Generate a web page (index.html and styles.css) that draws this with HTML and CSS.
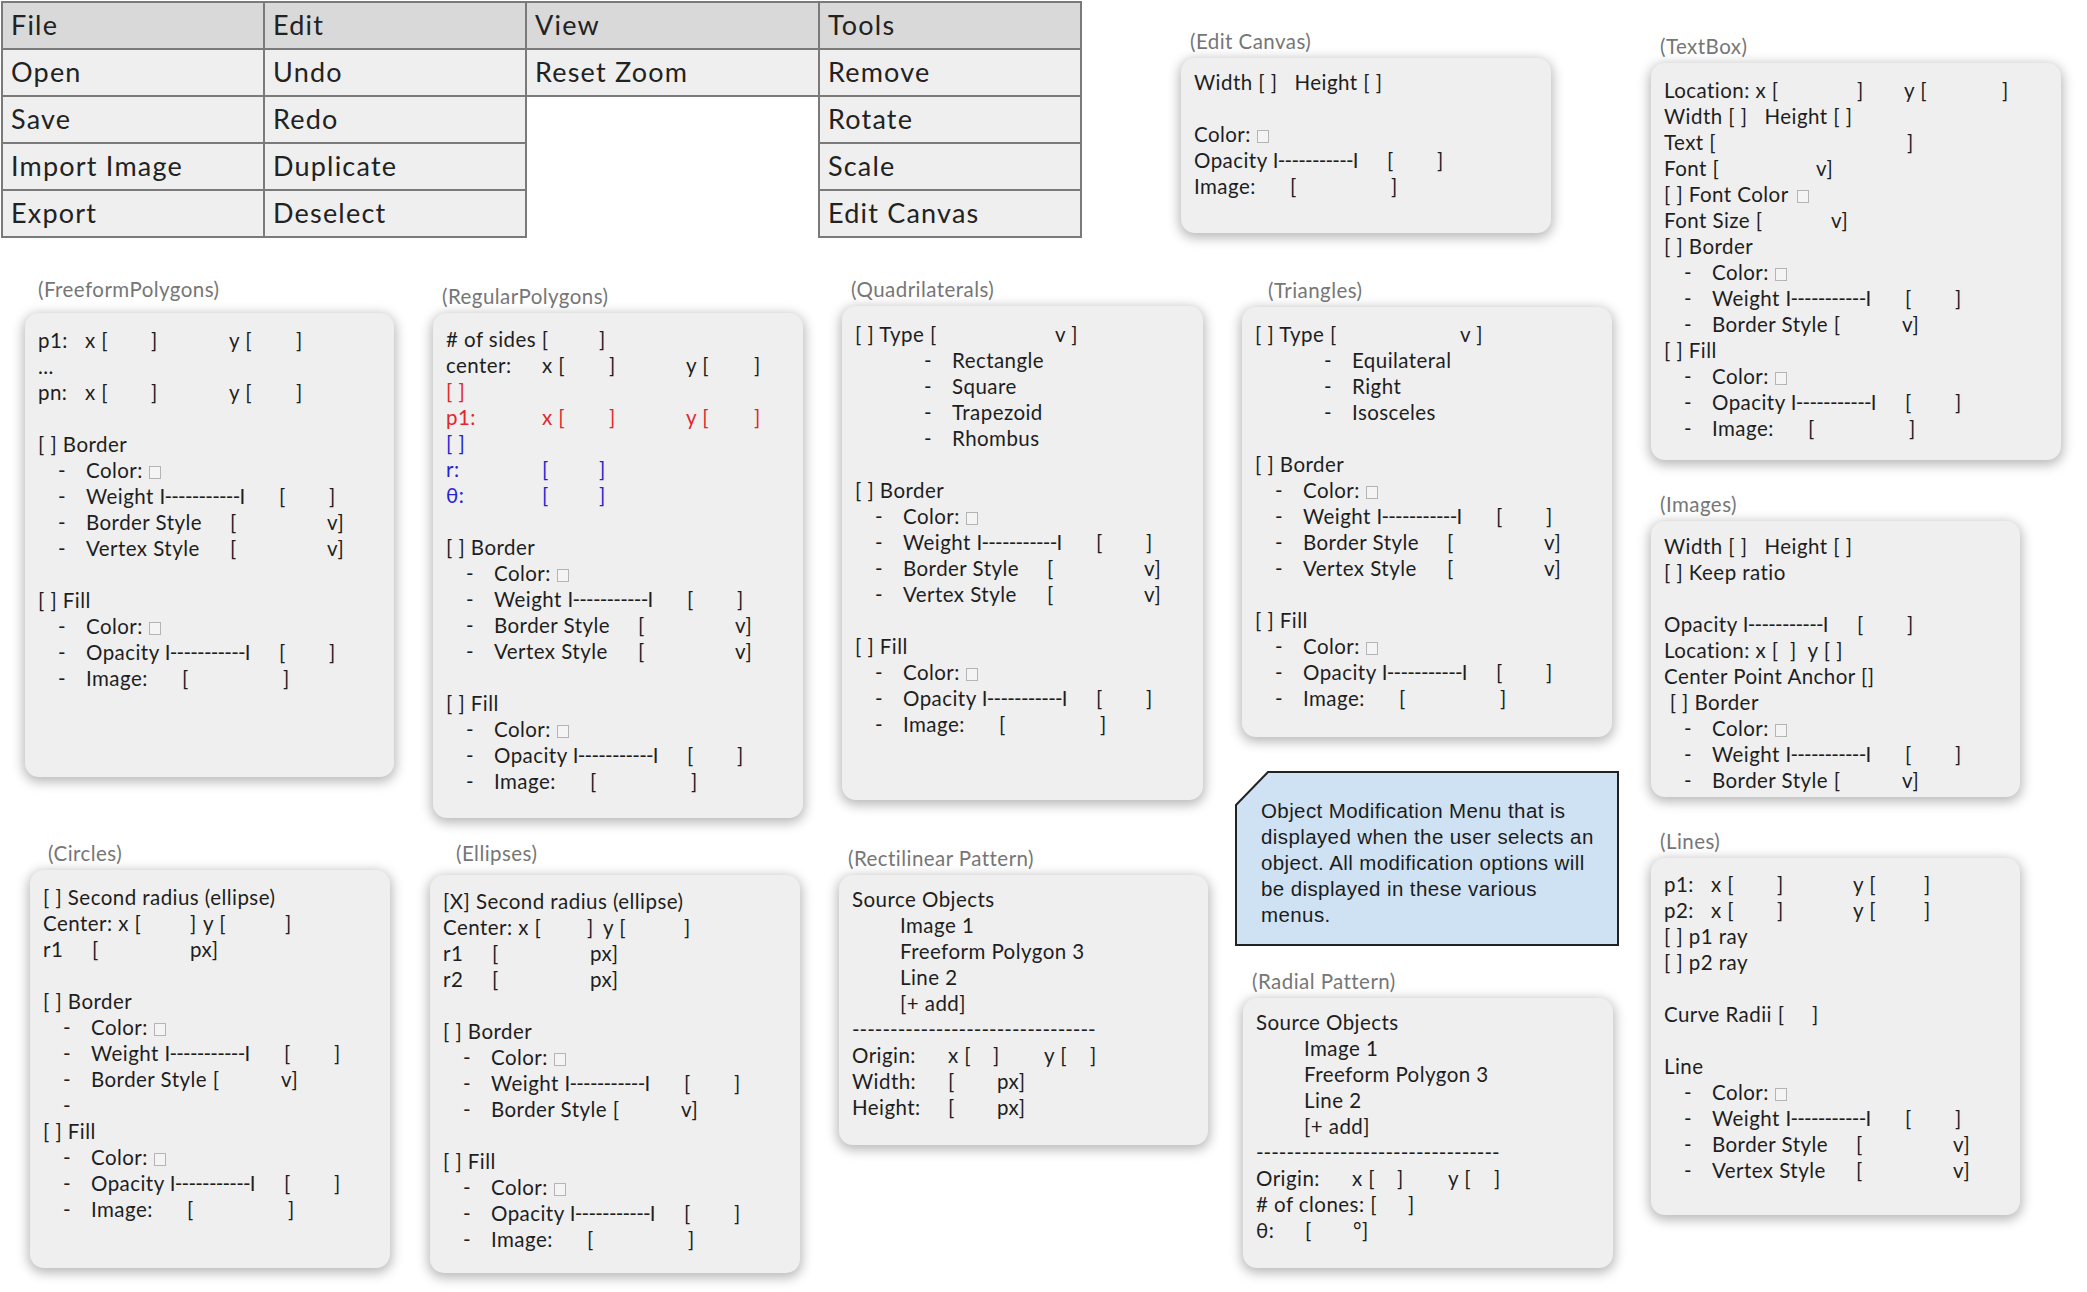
FILE: index.html
```html
<!DOCTYPE html>
<html>
<head>
<meta charset="utf-8">
<title>Object Modification Menus</title>
<link rel="stylesheet" href="styles.css">
</head>
<body>
<div class="board">
  <table class="menu">
    <colgroup><col class="c-file"><col class="c-edit"><col class="c-view"><col class="c-tools"></colgroup>
    <tr class="head"><td>File</td><td>Edit</td><td>View</td><td>Tools</td></tr>
    <tr><td>Open</td><td>Undo</td><td>Reset Zoom</td><td>Remove</td></tr>
    <tr><td>Save</td><td>Redo</td><td class="blank"></td><td>Rotate</td></tr>
    <tr><td>Import Image</td><td>Duplicate</td><td class="blank"></td><td>Scale</td></tr>
    <tr><td>Export</td><td>Deselect</td><td class="blank"></td><td>Edit Canvas</td></tr>
  </table>

  <section class="panel p-canvas">
    <div class="label">(Edit Canvas)</div>
    <div class="card">
<div class="ln">Width [ ]   Height [ ]</div>
<div class="ln"></div>
<div class="ln">Color: <i class="sw"></i></div>
<div class="ln"><span class="s w193">Opacity <span class="sl">I-----------I</span></span><span class="s w50">[</span>]</div>
<div class="ln"><span class="s w96">Image:</span><span class="s w101">[</span>]</div>
    </div>
  </section>

  <section class="panel p-textbox">
    <div class="label">(TextBox)</div>
    <div class="card">
<div class="ln"><span class="s w193">Location: x [</span><span class="s w47">]</span><span class="s w98">y [</span>]</div>
<div class="ln">Width [ ]   Height [ ]</div>
<div class="ln"><span class="s w243">Text [</span>]</div>
<div class="ln"><span class="s w152">Font [</span>v]</div>
<div class="ln"><span class="s w133">[ ] Font Color</span><i class="sw"></i></div>
<div class="ln"><span class="s w167">Font Size [</span>v]</div>
<div class="ln">[ ] Border</div>
<div class="ln d"><span class="dash">-</span>Color: <i class="sw"></i></div>
<div class="ln d"><span class="dash">-</span><span class="s w193">Weight <span class="sl">I-----------I</span></span><span class="s w50">[</span>]</div>
<div class="ln d"><span class="dash">-</span><span class="s w190">Border Style [</span>v]</div>
<div class="ln">[ ] Fill</div>
<div class="ln d"><span class="dash">-</span>Color: <i class="sw"></i></div>
<div class="ln d"><span class="dash">-</span><span class="s w193">Opacity <span class="sl">I-----------I</span></span><span class="s w50">[</span>]</div>
<div class="ln d"><span class="dash">-</span><span class="s w96">Image:</span><span class="s w101">[</span>]</div>
    </div>
  </section>

  <section class="panel p-freeform">
    <div class="label">(FreeformPolygons)</div>
    <div class="card">
<div class="ln"><span class="s w47">p1:</span><span class="s w66">x [</span><span class="s w78">]</span><span class="s w67">y [</span>]</div>
<div class="ln">...</div>
<div class="ln"><span class="s w47">pn:</span><span class="s w66">x [</span><span class="s w78">]</span><span class="s w67">y [</span>]</div>
<div class="ln"></div>
<div class="ln">[ ] Border</div>
<div class="ln d"><span class="dash">-</span>Color: <i class="sw"></i></div>
<div class="ln d"><span class="dash">-</span><span class="s w193">Weight <span class="sl">I-----------I</span></span><span class="s w50">[</span>]</div>
<div class="ln d"><span class="dash">-</span><span class="s w144">Border Style</span><span class="s w97">[</span>v]</div>
<div class="ln d"><span class="dash">-</span><span class="s w144">Vertex Style</span><span class="s w97">[</span>v]</div>
<div class="ln"></div>
<div class="ln">[ ] Fill</div>
<div class="ln d"><span class="dash">-</span>Color: <i class="sw"></i></div>
<div class="ln d"><span class="dash">-</span><span class="s w193">Opacity <span class="sl">I-----------I</span></span><span class="s w50">[</span>]</div>
<div class="ln d"><span class="dash">-</span><span class="s w96">Image:</span><span class="s w101">[</span>]</div>
    </div>
  </section>

  <section class="panel p-regular">
    <div class="label">(RegularPolygons)</div>
    <div class="card">
<div class="ln"><span class="s w153"># of sides [</span>]</div>
<div class="ln"><span class="s w96">center:</span><span class="s w67">x [</span><span class="s w77">]</span><span class="s w68">y [</span>]</div>
<div class="ln red">[ ]</div>
<div class="ln red"><span class="s w96">p1:</span><span class="s w67">x [</span><span class="s w77">]</span><span class="s w68">y [</span>]</div>
<div class="ln blue">[ ]</div>
<div class="ln blue"><span class="s w96">r:</span><span class="s w57">[</span>]</div>
<div class="ln blue"><span class="s w96">θ:</span><span class="s w57">[</span>]</div>
<div class="ln"></div>
<div class="ln">[ ] Border</div>
<div class="ln d"><span class="dash">-</span>Color: <i class="sw"></i></div>
<div class="ln d"><span class="dash">-</span><span class="s w193">Weight <span class="sl">I-----------I</span></span><span class="s w50">[</span>]</div>
<div class="ln d"><span class="dash">-</span><span class="s w144">Border Style</span><span class="s w97">[</span>v]</div>
<div class="ln d"><span class="dash">-</span><span class="s w144">Vertex Style</span><span class="s w97">[</span>v]</div>
<div class="ln"></div>
<div class="ln">[ ] Fill</div>
<div class="ln d"><span class="dash">-</span>Color: <i class="sw"></i></div>
<div class="ln d"><span class="dash">-</span><span class="s w193">Opacity <span class="sl">I-----------I</span></span><span class="s w50">[</span>]</div>
<div class="ln d"><span class="dash">-</span><span class="s w96">Image:</span><span class="s w101">[</span>]</div>
    </div>
  </section>

  <section class="panel p-quad">
    <div class="label">(Quadrilaterals)</div>
    <div class="card">
<div class="ln"><span class="s w200">[ ] Type [</span>v ]</div>
<div class="ln dd"><span class="dash">-</span>Rectangle</div>
<div class="ln dd"><span class="dash">-</span>Square</div>
<div class="ln dd"><span class="dash">-</span>Trapezoid</div>
<div class="ln dd"><span class="dash">-</span>Rhombus</div>
<div class="ln"></div>
<div class="ln">[ ] Border</div>
<div class="ln d"><span class="dash">-</span>Color: <i class="sw"></i></div>
<div class="ln d"><span class="dash">-</span><span class="s w193">Weight <span class="sl">I-----------I</span></span><span class="s w50">[</span>]</div>
<div class="ln d"><span class="dash">-</span><span class="s w144">Border Style</span><span class="s w97">[</span>v]</div>
<div class="ln d"><span class="dash">-</span><span class="s w144">Vertex Style</span><span class="s w97">[</span>v]</div>
<div class="ln"></div>
<div class="ln">[ ] Fill</div>
<div class="ln d"><span class="dash">-</span>Color: <i class="sw"></i></div>
<div class="ln d"><span class="dash">-</span><span class="s w193">Opacity <span class="sl">I-----------I</span></span><span class="s w50">[</span>]</div>
<div class="ln d"><span class="dash">-</span><span class="s w96">Image:</span><span class="s w101">[</span>]</div>
    </div>
  </section>

  <section class="panel p-tri">
    <div class="label">(Triangles)</div>
    <div class="card">
<div class="ln"><span class="s w205">[ ] Type [</span>v ]</div>
<div class="ln dd"><span class="dash">-</span>Equilateral</div>
<div class="ln dd"><span class="dash">-</span>Right</div>
<div class="ln dd"><span class="dash">-</span>Isosceles</div>
<div class="ln"></div>
<div class="ln">[ ] Border</div>
<div class="ln d"><span class="dash">-</span>Color: <i class="sw"></i></div>
<div class="ln d"><span class="dash">-</span><span class="s w193">Weight <span class="sl">I-----------I</span></span><span class="s w50">[</span>]</div>
<div class="ln d"><span class="dash">-</span><span class="s w144">Border Style</span><span class="s w97">[</span>v]</div>
<div class="ln d"><span class="dash">-</span><span class="s w144">Vertex Style</span><span class="s w97">[</span>v]</div>
<div class="ln"></div>
<div class="ln">[ ] Fill</div>
<div class="ln d"><span class="dash">-</span>Color: <i class="sw"></i></div>
<div class="ln d"><span class="dash">-</span><span class="s w193">Opacity <span class="sl">I-----------I</span></span><span class="s w50">[</span>]</div>
<div class="ln d"><span class="dash">-</span><span class="s w96">Image:</span><span class="s w101">[</span>]</div>
    </div>
  </section>

  <section class="panel p-images">
    <div class="label">(Images)</div>
    <div class="card">
<div class="ln">Width [ ]   Height [ ]</div>
<div class="ln">[ ] Keep ratio</div>
<div class="ln"></div>
<div class="ln"><span class="s w193">Opacity <span class="sl">I-----------I</span></span><span class="s w50">[</span>]</div>
<div class="ln">Location: x [  ]  y [ ]</div>
<div class="ln">Center Point Anchor []</div>
<div class="ln"> [ ] Border</div>
<div class="ln d"><span class="dash">-</span>Color: <i class="sw"></i></div>
<div class="ln d"><span class="dash">-</span><span class="s w193">Weight <span class="sl">I-----------I</span></span><span class="s w50">[</span>]</div>
<div class="ln d"><span class="dash">-</span><span class="s w190">Border Style [</span>v]</div>
    </div>
  </section>

  <section class="panel p-circles">
    <div class="label">(Circles)</div>
    <div class="card">
<div class="ln">[ ] Second radius (ellipse)</div>
<div class="ln"><span class="s w147">Center: x [</span><span class="s w13">]</span><span class="s w82">y [</span>]</div>
<div class="ln"><span class="s w49">r1</span><span class="s w98">[</span>px]</div>
<div class="ln"></div>
<div class="ln">[ ] Border</div>
<div class="ln d"><span class="dash">-</span>Color: <i class="sw"></i></div>
<div class="ln d"><span class="dash">-</span><span class="s w193">Weight <span class="sl">I-----------I</span></span><span class="s w50">[</span>]</div>
<div class="ln d"><span class="dash">-</span><span class="s w190">Border Style [</span>v]</div>
<div class="ln d"><span class="dash">-</span></div>
<div class="ln">[ ] Fill</div>
<div class="ln d"><span class="dash">-</span>Color: <i class="sw"></i></div>
<div class="ln d"><span class="dash">-</span><span class="s w193">Opacity <span class="sl">I-----------I</span></span><span class="s w50">[</span>]</div>
<div class="ln d"><span class="dash">-</span><span class="s w96">Image:</span><span class="s w101">[</span>]</div>
    </div>
  </section>

  <section class="panel p-ellipses">
    <div class="label">(Ellipses)</div>
    <div class="card">
<div class="ln">[X] Second radius (ellipse)</div>
<div class="ln"><span class="s w144">Center: x [</span><span class="s w16">]</span><span class="s w81">y [</span>]</div>
<div class="ln"><span class="s w49">r1</span><span class="s w98">[</span>px]</div>
<div class="ln"><span class="s w49">r2</span><span class="s w98">[</span>px]</div>
<div class="ln"></div>
<div class="ln">[ ] Border</div>
<div class="ln d"><span class="dash">-</span>Color: <i class="sw"></i></div>
<div class="ln d"><span class="dash">-</span><span class="s w193">Weight <span class="sl">I-----------I</span></span><span class="s w50">[</span>]</div>
<div class="ln d"><span class="dash">-</span><span class="s w190">Border Style [</span>v]</div>
<div class="ln"></div>
<div class="ln">[ ] Fill</div>
<div class="ln d"><span class="dash">-</span>Color: <i class="sw"></i></div>
<div class="ln d"><span class="dash">-</span><span class="s w193">Opacity <span class="sl">I-----------I</span></span><span class="s w50">[</span>]</div>
<div class="ln d"><span class="dash">-</span><span class="s w96">Image:</span><span class="s w101">[</span>]</div>
    </div>
  </section>

  <section class="panel p-rect">
    <div class="label">(Rectilinear Pattern)</div>
    <div class="card">
<div class="ln">Source Objects</div>
<div class="ln in">Image 1</div>
<div class="ln in">Freeform Polygon 3</div>
<div class="ln in">Line 2</div>
<div class="ln in">[+ add]</div>
<div class="ln rule">--------------------------------</div>
<div class="ln"><span class="s w96">Origin:</span><span class="s w45">x [</span><span class="s w51">]</span><span class="s w46">y [</span>]</div>
<div class="ln"><span class="s w96">Width:</span><span class="s w49">[</span>px]</div>
<div class="ln"><span class="s w96">Height:</span><span class="s w49">[</span>px]</div>
    </div>
  </section>

  <div class="note">
    <svg class="note-shape" viewBox="0 0 384 175" preserveAspectRatio="none"><polygon points="1,34 33,1 383,1 383,174 1,174"/></svg>
    <p>Object Modification Menu that is<br>displayed when the user selects an<br>object. All modification options will<br>be displayed in these various<br>menus.</p>
  </div>

  <section class="panel p-radial">
    <div class="label">(Radial Pattern)</div>
    <div class="card">
<div class="ln">Source Objects</div>
<div class="ln in">Image 1</div>
<div class="ln in">Freeform Polygon 3</div>
<div class="ln in">Line 2</div>
<div class="ln in">[+ add]</div>
<div class="ln rule">--------------------------------</div>
<div class="ln"><span class="s w96">Origin:</span><span class="s w45">x [</span><span class="s w51">]</span><span class="s w46">y [</span>]</div>
<div class="ln"><span class="s w152"># of clones: [</span>]</div>
<div class="ln"><span class="s w49">θ:</span><span class="s w48">[</span>°]</div>
    </div>
  </section>

  <section class="panel p-lines">
    <div class="label">(Lines)</div>
    <div class="card">
<div class="ln"><span class="s w47">p1:</span><span class="s w66">x [</span><span class="s w76">]</span><span class="s w71">y [</span>]</div>
<div class="ln"><span class="s w47">p2:</span><span class="s w66">x [</span><span class="s w76">]</span><span class="s w71">y [</span>]</div>
<div class="ln">[ ] p1 ray</div>
<div class="ln">[ ] p2 ray</div>
<div class="ln"></div>
<div class="ln"><span class="s w148">Curve Radii [</span>]</div>
<div class="ln"></div>
<div class="ln">Line</div>
<div class="ln d"><span class="dash">-</span>Color: <i class="sw"></i></div>
<div class="ln d"><span class="dash">-</span><span class="s w193">Weight <span class="sl">I-----------I</span></span><span class="s w50">[</span>]</div>
<div class="ln d"><span class="dash">-</span><span class="s w144">Border Style</span><span class="s w97">[</span>v]</div>
<div class="ln d"><span class="dash">-</span><span class="s w144">Vertex Style</span><span class="s w97">[</span>v]</div>
    </div>
  </section>
</div>
</body>
</html>
```

FILE: styles.css
```css
* { box-sizing: border-box; }
html, body { margin: 0; padding: 0; background: #ffffff; }
body {
  font-family: Lato, "Open Sans", "Liberation Sans", sans-serif;
  color: #1e1e1e;
}
.board {
  position: relative;
  width: 2087px;
  height: 1292px;
  overflow: hidden;
}

/* ---------- top menu table ---------- */
.menu {
  border-collapse: collapse;
  table-layout: fixed;
  width: 1079px;
  margin: 1px 0 0 1px;
  font-size: 27px;
  letter-spacing: 1.2px;
  color: #222;
}
.c-file, .c-edit, .c-tools { width: 262px; }
.c-view { width: 293px; }
.menu tr { height: 47px; }
.menu td {
  border: 2px solid #7a7a7a;
  background: #efefef;
  padding: 0 8px 3px 8px;
  vertical-align: middle;
  white-space: nowrap;
}
.menu .head td { background: #d9d9d9; }
.menu td.blank { border: none; background: transparent; }

/* ---------- floating panels ---------- */
.panel {
  position: absolute;
  display: flex;
  flex-direction: column;
}
.label {
  font-size: 20.5px;
  letter-spacing: 0.45px;
  line-height: 26px;
  height: 26px;
  color: #767676;
  padding-left: 9px;
  margin-bottom: 4px;
  white-space: nowrap;
}
.card {
  background: #efefef;
  border-radius: 14px;
  box-shadow: 0 3px 12px 2px rgba(0, 0, 0, 0.28);
  padding: 13px 10px 0 13px;
  font-size: 20.5px;
  letter-spacing: 0.45px;
  line-height: 26px;
  overflow: hidden;
}
.ln { height: 26px; white-space: pre; }
.ln.d { padding-left: 20px; }
.ln.dd { padding-left: 69px; }
.ln.in { padding-left: 48px; }
.dash { display: inline-block; width: 28px; }
.s { display: inline-block; }
.sl { letter-spacing: -0.8px; }
.red { color: #e3262b; }
.blue { color: #2424d6; }
.rule { letter-spacing: 0; }
.sw {
  display: inline-block;
  width: 12px;
  height: 13px;
  border: 1px solid #b4b4b4;
  background: #f4f4f4;
  vertical-align: -1px;
}

.w13 { width: 13px; } .w16 { width: 16px; } .w45 { width: 45px; } .w46 { width: 46px; }
.w47 { width: 47px; } .w48 { width: 48px; } .w49 { width: 49px; } .w50 { width: 50px; }
.w51 { width: 51px; } .w57 { width: 57px; } .w66 { width: 66px; } .w67 { width: 67px; }
.w68 { width: 68px; } .w71 { width: 71px; } .w76 { width: 76px; } .w77 { width: 77px; }
.w78 { width: 78px; } .w81 { width: 81px; } .w82 { width: 82px; } .w96 { width: 96px; }
.w97 { width: 97px; } .w98 { width: 98px; } .w101 { width: 101px; } .w133 { width: 133px; }
.w144 { width: 144px; } .w147 { width: 147px; } .w148 { width: 148px; } .w152 { width: 152px; }
.w153 { width: 153px; } .w167 { width: 167px; } .w190 { width: 190px; } .w193 { width: 193px; }
.w200 { width: 200px; } .w205 { width: 205px; } .w243 { width: 243px; }

/* panel placement on the canvas */
.p-canvas { left: 1181px; top: 28px; }
.p-canvas .card { width: 370px; height: 175px; padding-top: 11px; }

.p-textbox { left: 1651px; top: 33px; }
.p-textbox .card { width: 410px; height: 397px; padding-top: 14px; }

.p-freeform { left: 25px; top: 276px; }
.p-freeform .label { padding-left: 13px; margin-bottom: 11px; }
.p-freeform .card { width: 369px; height: 464px; padding-top: 14px; }

.p-regular { left: 433px; top: 283px; }
.p-regular .card { width: 370px; height: 505px; }

.p-quad { left: 842px; top: 276px; }
.p-quad .card { width: 361px; height: 494px; padding-top: 15px; }

.p-tri { left: 1242px; top: 277px; }
.p-tri .label { padding-left: 26px; }
.p-tri .card { width: 370px; height: 430px; padding-top: 14px; }

.p-images { left: 1651px; top: 491px; }
.p-images .card { width: 369px; height: 276px; padding-top: 12px; }

.p-circles { left: 30px; top: 840px; }
.p-circles .label { padding-left: 18px; }
.p-circles .card { width: 360px; height: 398px; padding-top: 14px; }

.p-ellipses { left: 430px; top: 840px; }
.p-ellipses .label { padding-left: 26px; margin-bottom: 9px; }
.p-ellipses .card { width: 370px; height: 398px; }

.p-rect { left: 839px; top: 845px; }
.p-rect .card { width: 369px; height: 270px; padding-top: 11px; }

.p-radial { left: 1243px; top: 968px; }
.p-radial .card { width: 370px; height: 270px; padding-top: 11px; }

.p-lines { left: 1651px; top: 828px; }
.p-lines .card { width: 369px; height: 357px; }

/* note callout */
.note {
  position: absolute;
  left: 1235px;
  top: 771px;
  width: 384px;
  height: 175px;
}
.note-shape {
  position: absolute;
  inset: 0;
  width: 100%;
  height: 100%;
}
.note-shape polygon {
  fill: #cfe2f3;
  stroke: #222;
  stroke-width: 2;
}
.note p {
  position: relative;
  margin: 0;
  padding: 27px 10px 0 26px;
  font-family: "Liberation Sans", Arial, sans-serif;
  font-size: 20.5px;
  letter-spacing: 0.4px;
  line-height: 26px;
  color: #1c1c1c;
  white-space: nowrap;
}
```
